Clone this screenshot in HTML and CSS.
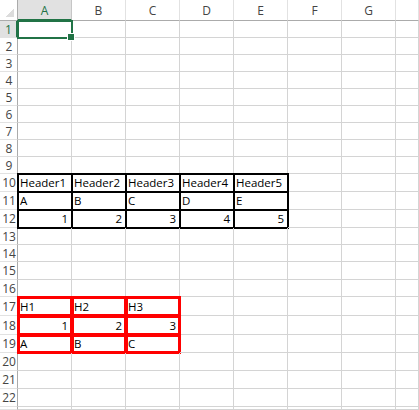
FILE: index.html
```html
<!DOCTYPE html>
<html lang="en">
<head>
  <meta charset="UTF-8" />
  <title>Book1</title>
  <link rel="stylesheet" href="styles.css">
</head>
<body>
  <div class="sheet">
    <div class="corner"><span class="tri"></span></div>
    <div class="colhead sel">A</div><div class="colhead">B</div><div class="colhead">C</div><div class="colhead">D</div><div class="colhead">E</div><div class="colhead">F</div><div class="colhead">G</div><div class="colhead"></div>

    <div class="rowhead sel">1</div><div class="cell active"><span class="handle"></span></div><div class="cell"></div><div class="cell"></div><div class="cell"></div><div class="cell"></div><div class="cell"></div><div class="cell"></div><div class="cell"></div>
    <div class="rowhead">2</div><div class="cell"></div><div class="cell"></div><div class="cell"></div><div class="cell"></div><div class="cell"></div><div class="cell"></div><div class="cell"></div><div class="cell"></div>
    <div class="rowhead">3</div><div class="cell"></div><div class="cell"></div><div class="cell"></div><div class="cell"></div><div class="cell"></div><div class="cell"></div><div class="cell"></div><div class="cell"></div>
    <div class="rowhead">4</div><div class="cell"></div><div class="cell"></div><div class="cell"></div><div class="cell"></div><div class="cell"></div><div class="cell"></div><div class="cell"></div><div class="cell"></div>
    <div class="rowhead">5</div><div class="cell"></div><div class="cell"></div><div class="cell"></div><div class="cell"></div><div class="cell"></div><div class="cell"></div><div class="cell"></div><div class="cell"></div>
    <div class="rowhead">6</div><div class="cell"></div><div class="cell"></div><div class="cell"></div><div class="cell"></div><div class="cell"></div><div class="cell"></div><div class="cell"></div><div class="cell"></div>
    <div class="rowhead">7</div><div class="cell"></div><div class="cell"></div><div class="cell"></div><div class="cell"></div><div class="cell"></div><div class="cell"></div><div class="cell"></div><div class="cell"></div>
    <div class="rowhead">8</div><div class="cell"></div><div class="cell"></div><div class="cell"></div><div class="cell"></div><div class="cell"></div><div class="cell"></div><div class="cell"></div><div class="cell"></div>
    <div class="rowhead">9</div><div class="cell"></div><div class="cell"></div><div class="cell"></div><div class="cell"></div><div class="cell"></div><div class="cell"></div><div class="cell"></div><div class="cell"></div>

    <div class="rowhead">10</div><div class="cell black">Header1</div><div class="cell black">Header2</div><div class="cell black">Header3</div><div class="cell black">Header4</div><div class="cell black">Header5</div><div class="cell"></div><div class="cell"></div><div class="cell"></div>
    <div class="rowhead">11</div><div class="cell black">A</div><div class="cell black">B</div><div class="cell black">C</div><div class="cell black">D</div><div class="cell black">E</div><div class="cell"></div><div class="cell"></div><div class="cell"></div>
    <div class="rowhead">12</div><div class="cell black num">1</div><div class="cell black num">2</div><div class="cell black num">3</div><div class="cell black num">4</div><div class="cell black num">5</div><div class="cell"></div><div class="cell"></div><div class="cell"></div>

    <div class="rowhead">13</div><div class="cell"></div><div class="cell"></div><div class="cell"></div><div class="cell"></div><div class="cell"></div><div class="cell"></div><div class="cell"></div><div class="cell"></div>
    <div class="rowhead">14</div><div class="cell"></div><div class="cell"></div><div class="cell"></div><div class="cell"></div><div class="cell"></div><div class="cell"></div><div class="cell"></div><div class="cell"></div>
    <div class="rowhead">15</div><div class="cell"></div><div class="cell"></div><div class="cell"></div><div class="cell"></div><div class="cell"></div><div class="cell"></div><div class="cell"></div><div class="cell"></div>
    <div class="rowhead">16</div><div class="cell"></div><div class="cell"></div><div class="cell"></div><div class="cell"></div><div class="cell"></div><div class="cell"></div><div class="cell"></div><div class="cell"></div>

    <div class="rowhead">17</div><div class="cell red">H1</div><div class="cell red">H2</div><div class="cell red">H3</div><div class="cell"></div><div class="cell"></div><div class="cell"></div><div class="cell"></div><div class="cell"></div>
    <div class="rowhead">18</div><div class="cell red num">1</div><div class="cell red num">2</div><div class="cell red num">3</div><div class="cell"></div><div class="cell"></div><div class="cell"></div><div class="cell"></div><div class="cell"></div>
    <div class="rowhead">19</div><div class="cell red">A</div><div class="cell red">B</div><div class="cell red">C</div><div class="cell"></div><div class="cell"></div><div class="cell"></div><div class="cell"></div><div class="cell"></div>

    <div class="rowhead">20</div><div class="cell"></div><div class="cell"></div><div class="cell"></div><div class="cell"></div><div class="cell"></div><div class="cell"></div><div class="cell"></div><div class="cell"></div>
    <div class="rowhead">21</div><div class="cell"></div><div class="cell"></div><div class="cell"></div><div class="cell"></div><div class="cell"></div><div class="cell"></div><div class="cell"></div><div class="cell"></div>
    <div class="rowhead">22</div><div class="cell"></div><div class="cell"></div><div class="cell"></div><div class="cell"></div><div class="cell"></div><div class="cell"></div><div class="cell"></div><div class="cell"></div>
    <div class="rowhead"></div><div class="cell"></div><div class="cell"></div><div class="cell"></div><div class="cell"></div><div class="cell"></div><div class="cell"></div><div class="cell"></div><div class="cell"></div>
  </div>
</body>
</html>
```

FILE: styles.css
```css
*, *::before, *::after {
  box-sizing: border-box;
}
html, body {
  margin: 0;
  background: #fff;
  overflow: hidden;
}
body {
  width: 419px;
  height: 410px;
  font-family: 'Open Sans', 'Noto Sans', sans-serif;
  color: #000;
}

.sheet {
  display: grid;
  grid-template-columns: 18px repeat(7, 54px) 23px;
  grid-template-rows:
    21px
    repeat(9, 17px)
    repeat(3, 18px)
    17px 17px 18px 17px
    19px 19px 18px
    repeat(3, 18px)
    3px;
  width: 419px;
  height: 410px;
  overflow: hidden;
}


.corner {
  display: flex;
  justify-content: flex-end;
  align-items: flex-end;
  padding: 0 3px 3px 0;
  border-right: 1px solid #ababab;
  border-bottom: 1px solid #ababab;
}
.tri {
  width: 9px;
  height: 9px;
  background: linear-gradient(135deg, transparent 50%, #dcdcdc 50%);
}

.colhead {
  display: flex;
  justify-content: center;
  align-items: center;
  font-size: 12px;
  color: #444;
  border-right: 1px solid #e2e2e2;
  border-bottom: 1px solid #ababab;
  padding-top: 1px;
}
.colhead.sel {
  background: #e1e1e1;
  color: #217346;
  border-right-color: #c6c6c6;
  border-bottom: 2px solid #217346;
}

.rowhead {
  display: flex;
  justify-content: center;
  align-items: center;
  font-size: 12px;
  color: #444;
  border-right: 1px solid #ababab;
  border-bottom: 1px solid #e2e2e2;
  padding-left: 1px;
  overflow: hidden;
}
.rowhead.sel {
  background: #e1e1e1;
  color: #217346;
  border-right: 2px solid #217346;
}


.cell {
  position: relative;
  display: flex;
  align-items: flex-end;
  padding: 0 2px 1px 2px;
  font-size: 11.5px;
  line-height: 15px;
  white-space: nowrap;
  border-right: 1px solid #d4d4d4;
  border-bottom: 1px solid #d4d4d4;
}
.cell.num {
  justify-content: flex-end;
  padding-right: 3px;
}

.cell.black {
  outline: 2px solid #000;
  outline-offset: -1px;
}
.cell.red {
  outline: 3px solid #ff0000;
  outline-offset: -2px;
}

.cell.active {
  outline: 2px solid #217346;
  outline-offset: -1px;
  z-index: 1;
}
.handle {
  position: absolute;
  right: -3px;
  bottom: -3px;
  width: 6px;
  height: 6px;
  background: #217346;
  box-shadow: 0 0 0 1px #fff;
}
```
